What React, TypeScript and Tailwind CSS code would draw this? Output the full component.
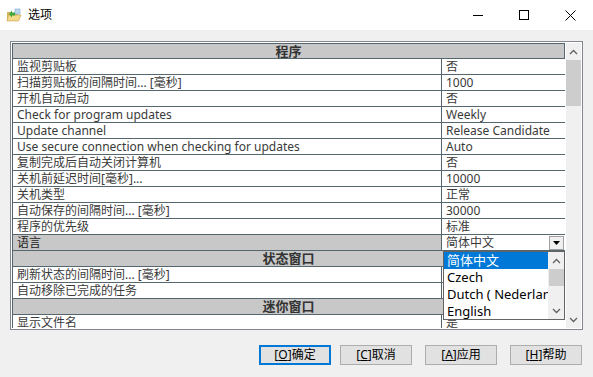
import React from 'react';

type Row = { type?: 'h'; label: string; value?: string; combo?: boolean };

const rows: Row[] = [
  { type: 'h', label: '程序' },
  { label: '监视剪贴板', value: '否' },
  { label: '扫描剪贴板的间隔时间... [毫秒]', value: '1000' },
  { label: '开机自动启动', value: '否' },
  { label: 'Check for program updates', value: 'Weekly' },
  { label: 'Update channel', value: 'Release Candidate' },
  { label: 'Use secure connection when checking for updates', value: 'Auto' },
  { label: '复制完成后自动关闭计算机', value: '否' },
  { label: '关机前延迟时间[毫秒]...', value: '10000' },
  { label: '关机类型', value: '正常' },
  { label: '自动保存的间隔时间... [毫秒]', value: '30000' },
  { label: '程序的优先级', value: '标准' },
  { label: '语言', combo: true },
  { type: 'h', label: '状态窗口' },
  { label: '刷新状态的间隔时间... [毫秒]', value: '' },
  { label: '自动移除已完成的任务', value: '' },
  { type: 'h', label: '迷你窗口' },
  { label: '显示文件名', value: '是' },
];

const languages = ['简体中文', 'Czech', 'Dutch ( Nederlands )', 'English'];

const Chevron = ({ up }: { up?: boolean }) => (
  <svg width="9" height="6" viewBox="0 0 9 6" className="block">
    <path d={up ? 'M1 5 L4.5 1.5 L8 5' : 'M1 1 L4.5 4.5 L8 1'} fill="none" stroke="#606060" strokeWidth="1.3" />
  </svg>
);

const AppIcon = () => (
  <svg width="16" height="16" viewBox="0 0 16 16">
    <path d="M1 5 L6 5 L7 6.5 L12 6.5 L12 14 L1 14 Z" fill="#d9b35a" />
    <path d="M2.5 8 L15 8 L12.5 14 L1 14 Z" fill="#f3d98a" stroke="#c9a04a" strokeWidth="0.6" />
    <path d="M9 2 L14 2 L14 7 L9 7 Z" fill="#bcd9ef" stroke="#7aa8cc" strokeWidth="0.6" />
    <path d="M3 7 L6 3.5 L6 5.5 L9 5.5 L9 8.5 L6 8.5 L6 10.5 Z" fill="#3ea83a" />
  </svg>
);

const Btn = ({ k, label, focus }: { k: string; label: string; focus?: boolean }) => (
  <button
    className={
      focus
        ? 'w-[72px] h-[20px] bg-[#e1e1e1] border-2 border-[#0078d7] text-[12px] text-black flex items-center justify-center'
        : 'w-[72px] h-[20px] bg-[#e1e1e1] border border-[#adadad] text-[12px] text-black flex items-center justify-center'
    }
  >
    [<span className="underline">{k}</span>]{label}
  </button>
);

export default function App() {
  return (
    <div
      className="w-[593px] h-[377px] bg-[#f0f0f0] flex flex-col overflow-hidden"
      style={{ fontFamily: '"Noto Sans", "Noto Sans CJK SC", sans-serif' }}
    >
      {/* 标题栏 */}
      <div className="h-[30px] bg-white flex items-center shrink-0">
        <div className="pl-[6px] pr-[6px] flex items-center">
          <AppIcon />
        </div>
        <span className="text-[12px] text-black">选项</span>
        <div className="ml-auto flex h-full">
          <div className="w-[46px] h-full flex items-center justify-center">
            <div className="w-[10px] h-px bg-black" />
          </div>
          <div className="w-[46px] h-full flex items-center justify-center">
            <div className="w-[10px] h-[10px] border border-black" />
          </div>
          <div className="w-[46px] h-full flex items-center justify-center">
            <svg width="11" height="11" viewBox="0 0 11 11">
              <path d="M0.5 0.5 L10.5 10.5 M10.5 0.5 L0.5 10.5" stroke="#000" strokeWidth="1" />
            </svg>
          </div>
        </div>
      </div>

      {/* 属性表 */}
      <div className="pl-[10px] pr-[10px] pt-[11px]">
        <div className="h-[289px] border border-[#828790] bg-white p-px flex">
          <div className="relative w-[553px] h-full overflow-hidden">
            <div className="flex flex-col text-[12px] leading-[15px]">
              {rows.map((r, i) =>
                r.type === 'h' ? (
                  <div
                    key={i}
                    className={
                      i === 0
                        ? 'h-[16px] bg-[#c8c8c8] border border-[#56666f] flex items-center justify-center font-bold text-[13px] text-[#333]'
                        : 'h-[16px] bg-[#c8c8c8] border border-t-0 border-[#56666f] flex items-center justify-center font-bold text-[13px] text-[#333]'
                    }
                  >
                    {r.label}
                  </div>
                ) : (
                  <div key={i} className="h-[16px] flex border-b border-[#56666f]">
                    <div
                      className={
                        r.combo
                          ? 'w-[430px] border-l border-r border-[#56666f] bg-[#c8c8c8] pl-[4px] text-[#222] whitespace-nowrap overflow-hidden'
                          : 'w-[430px] border-l border-r border-[#56666f] pl-[4px] text-[#3a3a3a] whitespace-nowrap overflow-hidden'
                      }
                    >
                      {r.label}
                    </div>
                    {r.combo ? (
                      <div className="w-[123px] flex items-center bg-white pl-[4px] pr-[1px] text-[#3a3a3a]">
                        <span className="flex-1">简体中文</span>
                        <div className="w-[15px] h-[14px] bg-[#f0f0f0] border border-[#a0a0a0] flex items-center justify-center">
                          <svg width="7" height="4" viewBox="0 0 7 4">
                            <path d="M0 0 L7 0 L3.5 4 Z" fill="#000" />
                          </svg>
                        </div>
                      </div>
                    ) : (
                      <div className="w-[123px] pl-[4px] text-[#3a3a3a] whitespace-nowrap overflow-hidden">
                        {r.value}
                      </div>
                    )}
                  </div>
                )
              )}
            </div>

            {/* 语言下拉列表 */}
            <div className="absolute left-[431px] top-[208px] w-[122px] h-[69px] bg-white border border-[#646464] flex">
              <div className="flex-1 flex flex-col overflow-hidden">
                {languages.map((l, i) => (
                  <div
                    key={l}
                    className={
                      i === 0
                        ? 'h-[17px] shrink-0 bg-[#0078d7] text-white text-[13px] leading-[17px] pl-[3px] whitespace-nowrap'
                        : 'h-[17px] shrink-0 text-black text-[13px] leading-[17px] pl-[3px] whitespace-nowrap'
                    }
                  >
                    {l}
                  </div>
                ))}
              </div>
              <div className="w-[16px] bg-[#f0f0f0] flex flex-col items-center">
                <div className="h-[17px] flex items-center justify-center">
                  <Chevron up />
                </div>
                <div className="w-[15px] h-[17px] bg-[#cdcdcd]" />
                <div className="flex-1" />
                <div className="h-[17px] flex items-center justify-center">
                  <Chevron />
                </div>
              </div>
            </div>
          </div>

          {/* 滚动条 */}
          <div className="w-[15px] ml-px bg-[#f0f0f0] flex flex-col items-center">
            <div className="h-[17px] flex items-center justify-center">
              <Chevron up />
            </div>
            <div className="w-[15px] h-[46px] bg-[#cdcdcd]" />
            <div className="flex-1" />
            <div className="h-[17px] flex items-center justify-center">
              <Chevron />
            </div>
          </div>
        </div>
      </div>

      {/* 按钮 */}
      <div className="flex justify-end pr-[11px] pt-[15px] gap-[13px]">
        <div className="flex gap-[9px]">
          <Btn k="O" label="确定" focus />
          <Btn k="C" label="取消" />
        </div>
        <Btn k="A" label="应用" />
        <Btn k="H" label="帮助" />
      </div>
    </div>
  );
}
